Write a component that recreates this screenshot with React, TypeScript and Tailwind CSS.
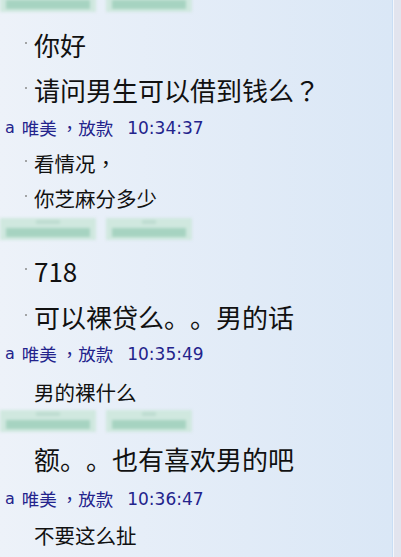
import React from 'react';

const font = { fontFamily: '"Noto Sans CJK SC", "Noto Sans", sans-serif' };

function BlurBlock({ w }: { w: string }) {
  return (
    <div className={`flex h-[22px] ${w} flex-col bg-[#d0e8df] px-[6px] py-[2px] blur-[1.5px]`}>
      <div className="mx-[30px] h-[4px] bg-[#bddcd0]" />
      <div className="mt-[4px] h-[9px] bg-[#a6d3c1]" />
    </div>
  );
}

function Blur() {
  return (
    <div className="flex h-[26px] items-center gap-[10px]">
      <BlurBlock w="w-[96px]" />
      <BlurBlock w="w-[86px]" />
    </div>
  );
}

// wrap fullwidth punctuation so it sits centred in its box, as in the screenshot
function T({ text }: { text: string }) {
  const parts = text.split(/([，？])/);
  return (
    <>
      {parts.map((p, i) =>
        p === '，' || p === '？' ? (
          <span key={i} style={{ fontFamily: '"Noto Sans CJK TC", sans-serif' }}>
            {p}
          </span>
        ) : (
          <React.Fragment key={i}>{p}</React.Fragment>
        )
      )}
    </>
  );
}

function Line({ text, big, dot, mt }: { text: string; big?: boolean; dot?: boolean; mt: string }) {
  return (
    <div className={`flex items-center text-[#111] ${mt} ${big ? 'h-[30px] text-[26px]' : 'h-[26px] text-[20.5px]'}`}>
      <div className="flex w-[34px] justify-end pr-[7px]">
        {dot && <span className="-mt-[3px] h-[2px] w-[2px] rounded-full bg-[#8a8a8a]" />}
      </div>
      <span className="leading-none whitespace-nowrap [text-spacing-trim:space-all]">
        <T text={text} />
      </span>
    </div>
  );
}

function Header({ time, mt }: { time: string; mt: string }) {
  return (
    <div className={`flex h-[22px] items-center pl-[5px] text-[17.5px] text-[#23238c] ${mt}`}>
      <span className="font-['DejaVu_Sans'] text-[16px] leading-none">a</span>
      <span className="ml-[7px] leading-none whitespace-nowrap [text-spacing-trim:space-all]">
        <T text="唯美 ，放款" />
      </span>
      <span className="ml-[14px] font-['DejaVu_Sans'] text-[17px] leading-none">{time}</span>
    </div>
  );
}

export default function App() {
  return (
    <div className="flex h-[557px] w-[401px] overflow-hidden" style={font}>
      <div className="flex h-full w-[392px] flex-col bg-gradient-to-r from-[#edf2f9] to-[#dae7f6]">
        <div className="-mt-[12px]">
          <Blur />
        </div>
        <Line text="你好" big dot mt="mt-[16px]" />
        <Line text="请问男生可以借到钱么？" big dot mt="mt-[15px]" />
        <Header time="10:34:37" mt="mt-[12px]" />
        <Line text="看情况，" dot mt="mt-[11px]" />
        <Line text="你芝麻分多少" dot mt="mt-[9px]" />
        <div className="mt-[5px]">
          <Blur />
        </div>
        <Line text="718" big dot mt="mt-[14px]" />
        <Line text="可以裸贷么。。男的话" big dot mt="mt-[16px]" />
        <Header time="10:35:49" mt="mt-[11px]" />
        <Line text="男的裸什么" mt="mt-[14px]" />
        <div className="mt-[3px]">
          <Blur />
        </div>
        <Line text="额。。也有喜欢男的吧" big mt="mt-[10px]" />
        <Header time="10:36:47" mt="mt-[14px]" />
        <Line text="不要这么扯" mt="mt-[12px]" />
      </div>
      <div className="h-full w-[1px] bg-[#c9def5]" />
      <div className="h-full w-[1px] bg-[#f4f6fb]" />
      <div className="h-full flex-1 bg-[#e2e4ee]" />
    </div>
  );
}
